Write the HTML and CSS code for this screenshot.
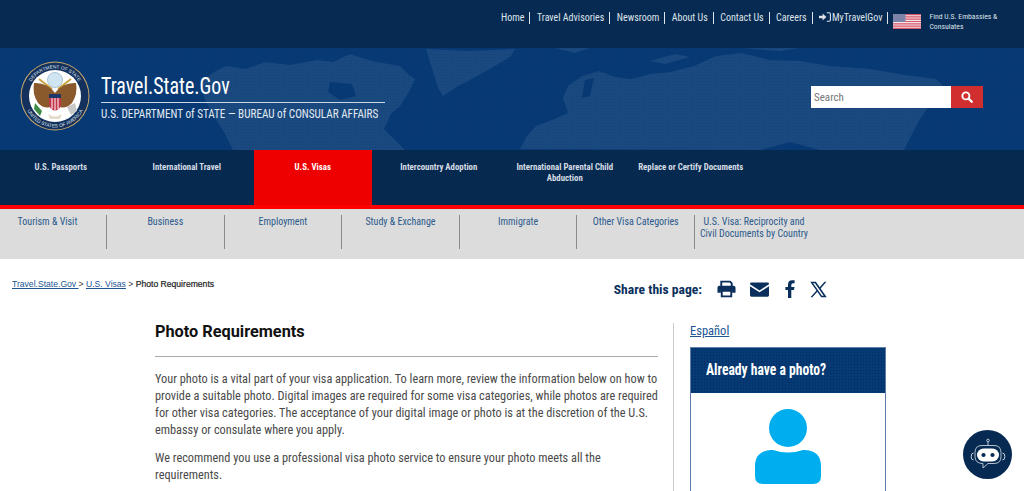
FILE: index.html
```html
<!DOCTYPE html>
<html lang="en">
<head>
    <meta charset="UTF-8">
    <meta name="viewport" content="width=device-width, initial-scale=1.0">
    <title>Photo Requirements</title>
    <link rel="stylesheet" href="styles.css">
</head>
<body>

    <!-- Top links -->
    <div class="topbar">
        <ul class="toplinks">
            <li><a href="#">Home</a></li>
            <li><a href="#">Travel Advisories</a></li>
            <li><a href="#">Newsroom</a></li>
            <li><a href="#">About Us</a></li>
            <li><a href="#">Contact Us</a></li>
            <li><a href="#">Careers</a></li>
            <li>
                <a href="#" class="signin">
                    <svg class="signin-icon" viewBox="0 0 12 10"><path d="M0 3.7h3.6V1.6L7.4 5 3.6 8.4V6.3H0z" fill="#dfe4ea"/><path d="M7.8.8h2.4q1.2 0 1.2 1.2v6q0 1.2-1.2 1.2H7.8" fill="none" stroke="#dfe4ea" stroke-width="1.1"/></svg>MyTravelGov
                </a>
            </li>
        </ul>
        <svg class="flag" viewBox="0 0 27 15" preserveAspectRatio="none">
            <rect width="27" height="15" fill="#f3e6e8"/>
            <path d="M0 .6h27M0 2.9h27M0 5.2h27M0 7.5h27M0 9.8h27M0 12.1h27M0 14.4h27" stroke="#d9566a" stroke-width="1.2"/>
            <rect width="12" height="8" fill="#7d83a8"/>
        </svg>
        <a href="#" class="embassies">Find U.S. Embassies &amp; Consulates</a>
    </div>

    <!-- Header with map -->
    <header class="masthead">
        <svg class="worldmap" viewBox="0 0 1024 102" preserveAspectRatio="none">
            <defs>
                <pattern id="dots" width="3" height="3" patternUnits="userSpaceOnUse"><rect width="1" height="1" fill="#04295c" opacity=".2"/></pattern>
            </defs>
            <!-- north america -->
            <path d="M233 102L224 84L215 70L205 52L200 34L214 24L226 18L246 21L265 14L290 17L317 12L333 14L350 6L372 13L400 18L408 26L415 31L409 44L400 58L391 66L384 81L393 90L405 102Z" fill="#19497f"/>
            <!-- greenland -->
            <path d="M426 1L470 3L515 1L511 8L505 12L488 22L470 32L458 38L443 48L438 40L435 30L430 14Z" fill="#19497f"/>
            <!-- eurasia -->
            <path d="M520 101L527 88L536 78L552 72L568 65L563 50L568 38L582 28L599 23L615 29L631 31L650 26L670 24L694 18L716 8L741 5L770 12L800 13L830 18L870 21L905 27L936 31L946 41L933 52L920 71L913 84L904 102L820 102L790 94L760 102Z" fill="#19497f"/>
            <path d="M650 13L675 6L690 9L665 16ZM555 0L590 0L575 5ZM740 0L800 0L780 3Z" fill="#19497f"/>
            <!-- water cut outs -->
            <path d="M330 34L352 36L356 48L340 52L328 44ZM585 32L594 30L590 48L582 50Z" fill="#073a75"/>
            <rect width="1024" height="102" fill="url(#dots)"/>
        </svg>
        <div class="brand">
            <svg class="seal" viewBox="0 0 70 70">
                <defs>
                    <path id="sealtop" d="M35 35 m-27.6 0 a27.6 27.6 0 0 1 55.2 0"/>
                    <path id="sealbottom" d="M35 35 m-31.4 0 a31.4 31.4 0 0 0 62.8 0"/>
                </defs>
                <circle cx="35" cy="35" r="34.5" fill="#c9a86a"/>
                <circle cx="35" cy="35" r="33.5" fill="#14305c"/>
                <circle cx="35" cy="35" r="26" fill="#fff"/>
                <text class="seal-text"><textPath href="#sealtop" startOffset="50%" text-anchor="middle">DEPARTMENT OF STATE</textPath></text>
                <text class="seal-text"><textPath href="#sealbottom" startOffset="50%" text-anchor="middle">UNITED STATES OF AMERICA</textPath></text>
                <circle cx="35" cy="19" r="7.5" fill="#cfe6f2" stroke="#a9c4d6"/>
                <path d="M19 18l13 10M51 18l-13 10" stroke="#c9a33f" stroke-width="2"/>
                <path d="M35 32 Q27 21 14 22 Q12 33 18 42 Q24 48 30 46 L40 46 Q46 48 52 42 Q58 33 56 22 Q43 21 35 32Z" fill="#8a5a2c"/>
                <path d="M29 33h12v10q0 5-6 7-6-2-6-7z" fill="#c3344a"/>
                <path d="M29 33h12v4H29z" fill="#1c3768"/>
                <path d="M32 37v11M35 37v13M38 37v11" stroke="#fff" stroke-width="1"/>
                <path d="M15 42l7 8-2 5-6-7z" fill="#3f8c48"/>
                <path d="M47 46l8-4 2 8-6 4z" fill="#c9c9c9"/>
                <path d="M28 53q7 5 14 0l-2 5h-10z" fill="#e4dcc8"/>
            </svg>
            <div class="brand-text">
                <div class="sitename-row"><a href="#" class="sitename">Travel.State.Gov</a></div>
                <div class="bureau">U.S. DEPARTMENT of STATE — BUREAU of CONSULAR AFFAIRS</div>
            </div>
        </div>
        <form class="search">
            <input class="search-input" type="text" placeholder="Search">
            <button class="search-btn" type="button" aria-label="Search">
                <svg viewBox="0 0 12 12" width="12" height="12"><circle cx="4.9" cy="4.9" r="3.5" fill="none" stroke="#fff" stroke-width="1.9"/><path d="M7.6 7.6l3.2 3.2" stroke="#fff" stroke-width="2.2" stroke-linecap="round"/></svg>
            </button>
        </form>
    </header>

    <!-- Main navigation -->
    <nav class="mainnav">
        <a href="#" class="mainnav-item">U.S. Passports</a>
        <a href="#" class="mainnav-item">International Travel</a>
        <a href="#" class="mainnav-item active">U.S. Visas</a>
        <a href="#" class="mainnav-item">Intercountry Adoption</a>
        <a href="#" class="mainnav-item">International Parental Child Abduction</a>
        <a href="#" class="mainnav-item">Replace or Certify Documents</a>
    </nav>

    <nav class="subnav">
        <a href="#" class="subnav-item">Tourism &amp; Visit</a>
        <a href="#" class="subnav-item">Business</a>
        <a href="#" class="subnav-item">Employment</a>
        <a href="#" class="subnav-item">Study &amp; Exchange</a>
        <a href="#" class="subnav-item">Immigrate</a>
        <a href="#" class="subnav-item">Other Visa Categories</a>
        <a href="#" class="subnav-item last">U.S. Visa: Reciprocity and<br>Civil Documents by Country</a>
    </nav>

    <!-- Breadcrumb and share -->
    <div class="toolrow">
        <div class="breadcrumb">
            <a href="#">Travel.State.Gov </a> &gt; <a href="#">U.S. Visas</a> &gt; <span class="crumb-current">Photo Requirements</span>
        </div>
        <div class="share">
            <span class="share-label">Share this page:</span>
            <svg class="share-icon print" viewBox="0 0 20 18"><path d="M4.5 6V1.2h9.2L15.5 3v3" fill="none" stroke="#0a2f5c" stroke-width="2"/><path d="M2.6 5.5h14.8Q19.5 5.5 19.5 7.6V13h-3.6v-2.6H4.1V13H.5V7.6Q.5 5.5 2.6 5.5z" fill="#0a2f5c"/><path d="M5 11h10v5.8H5z" fill="#fff" stroke="#0a2f5c" stroke-width="2"/></svg>
            <svg class="share-icon mail" viewBox="0 0 20 15"><path d="M1.5 0h17Q20 0 20 1.5v.6l-10 6.4L0 2.1v-.6Q0 0 1.5 0z" fill="#0a2f5c"/><path d="M0 4l10 6.4L20 4v9.5q0 1.5-1.5 1.5h-17Q0 15 0 13.5z" fill="#0a2f5c"/></svg>
            <svg class="share-icon fb" viewBox="0 0 10 18"><path d="M3 18V10H.4V6.9H3V4.6Q3 .3 7.2.3h2.4v3H8q-1.7 0-1.7 1.7V6.9h3.2L9 10H6.3v8z" fill="#0a2f5c"/></svg>
            <svg class="share-icon xlogo" viewBox="0 0 18 17"><path d="M.3.3h5.9L17.7 16.7h-5.9zM3.3 1.9l9.3 13.2h1.9L5.2 1.9z" fill="#0a2f5c" fill-rule="evenodd"/><path d="M15.4.3L9.8 6.7l1 1.4L17.4.3zM7.6 8.7L.5 16.7h2l6-6.6z" fill="#0a2f5c"/></svg>
        </div>
    </div>

    <!-- Page body -->
    <div class="page">
        <main class="article">
            <h1 class="title">Photo Requirements</h1>
            <p>Your photo is a vital part of your visa application. To learn more, review the information below on how to provide a suitable photo. Digital images are required for some visa categories, while photos are required for other visa categories. The acceptance of your digital image or photo is at the discretion of the U.S. embassy or consulate where you apply.</p>
            <p>We recommend you use a professional visa photo service to ensure your photo meets all the requirements.</p>
        </main>
        <aside class="sidebar">
            <a href="#" class="lang">Español</a>
            <div class="card">
                <div class="card-head"><span class="card-title">Already have a photo?</span></div>
                <div class="card-body">
                    <svg class="person" viewBox="0 0 66 75"><circle cx="33" cy="19" r="19" fill="#00aeef"/><path d="M0 62V57C0 44 9 41 18 41Q33 46 48 41C57 41 66 44 66 57V67Q66 75 58 75H8Q0 75 0 67z" fill="#00aeef"/></svg>
                </div>
            </div>
        </aside>
    </div>

    <!-- Chat bot button -->
    <button class="chatbot" type="button" aria-label="Chat">
        <svg viewBox="0 0 36 34" width="36" height="34">
            <circle cx="18" cy="2.5" r="1.3" fill="none" stroke="#dfe6ee" stroke-width=".8"/>
            <path d="M18 4v3.5" stroke="#dfe6ee" stroke-width=".8"/>
            <path d="M3.5 15a2 3 0 0 0 0 7M32.5 15a2 3 0 0 1 0 7" fill="none" stroke="#dfe6ee" stroke-width=".9"/>
            <path d="M12 7.5h12q7 0 7 7v4q0 7-7 7h-6l-5 4.5v-4.5q-8 0-8-7v-4q0-7 7-7z" fill="none" stroke="#dfe6ee" stroke-width=".8"/>
            <rect x="7" y="10.5" width="22" height="13" rx="6.5" fill="#fff"/>
            <circle cx="13.5" cy="17" r="2.1" fill="#062a52"/>
            <circle cx="22.5" cy="17" r="2.1" fill="#062a52"/>
        </svg>
    </button>

</body>
</html>
```

FILE: styles.css
```css
* {
    box-sizing: border-box;
}
html, body {
    height: 491px;
    overflow: hidden;
}
body {
    font-family: "Roboto Condensed", "Liberation Sans Narrow", Roboto, sans-serif;
    font-stretch: 75%;
    margin: 0;
    background-color: #fff;
    color: #4a4a4a;
}
a {
    color: inherit;
    text-decoration: none;
}

/* top bar */
.topbar {
    height: 48px;
    background-color: #062a52;
    display: flex;
    align-items: flex-start;
    padding: 12px 0 0 501px;
    color: #dfe4ea;
}
.toplinks {
    list-style-type: none;
    margin: 0;
    padding: 0;
    display: flex;
    flex: none;
    font-size: 10px;
    line-height: 12px;
    white-space: nowrap;
}
.toplinks li {
    padding: 0 5px 0 0;
    margin-right: 6.5px;
    border-right: 1.5px solid #dfe4ea;
}
.toplinks li:last-child {
    margin-right: 0;
}
.signin-icon {
    width: 12px;
    height: 10px;
    vertical-align: -1px;
    margin-right: 1px;
}
.flag {
    flex: none;
    width: 28px;
    height: 15px;
    margin: 2px 8px 0 5px;
}
.embassies {
    flex: none;
    width: 74px;
    font-size: 7.7px;
    line-height: 10px;
}

/* masthead */
.masthead {
    position: relative;
    height: 102px;
    background-color: #073a75;
    display: flex;
    justify-content: space-between;
    overflow: hidden;
}
.worldmap {
    position: absolute;
    left: 0;
    top: 0;
    width: 100%;
    height: 100%;
}
.brand {
    position: relative;
    display: flex;
    padding: 13px 0 0 20px;
}
.seal {
    width: 70px;
    height: 70px;
}
.seal-text {
    font-size: 4.8px;
    fill: #dfe4ea;
    font-family: "Liberation Sans", sans-serif;
}
.brand-text {
    margin-left: 11px;
    width: 284px;
}
.sitename-row {
    padding-top: 11px;
    padding-bottom: 2px;
    border-bottom: 1px solid #c9d6e6;
}
.sitename {
    display: inline-block;
    color: #fff;
    font-size: 24px;
    line-height: 28px;
    transform: scaleX(.83);
    transform-origin: left center;
}
.bureau {
    color: #e4eaf2;
    font-size: 12px;
    line-height: 14px;
    padding-top: 4px;
    white-space: nowrap;
    transform: scaleX(.93);
    transform-origin: left center;
}
.search {
    position: relative;
    display: flex;
    margin: 38px 41px 0 0;
    height: 22px;
}
.search-input {
    width: 140px;
    height: 22px;
    border: 0;
    padding: 0 3px;
    font-family: inherit;
    font-stretch: inherit;
    font-size: 11px;
    background-color: #fff;
}
.search-btn {
    width: 32px;
    height: 22px;
    border: 0;
    padding: 0;
    background-color: #d12f2f;
    display: flex;
    align-items: center;
    justify-content: center;
}

/* navigation */
.mainnav {
    height: 59px;
    background-color: #06294f;
    border-bottom: 4px solid #f00;
    display: flex;
    gap: 8.4px;
    padding-left: 2px;
}
.mainnav-item {
    width: 117.6px;
    padding-top: 12px;
    text-align: center;
    color: #d5dce4;
    font-size: 8.8px;
    font-weight: 700;
    line-height: 11px;
}
.mainnav-item.active {
    background-color: #e00;
    color: #fff;
}
.subnav {
    height: 50px;
    background-color: #dcdcdc;
    display: flex;
    padding-top: 6px;
}
.subnav-item {
    flex: 0 0 117.6px;
    height: 34px;
    padding-top: 1px;
    text-align: center;
    color: #2b5a8c;
    font-size: 10px;
    line-height: 11.5px;
    border-right: 1px solid #8a8a8a;
}
.subnav-item:first-child {
    flex-basis: 107px;
    padding-right: 11px;
}
.subnav-item.last {
    flex: 0 0 118px;
    border-right: 0;
    white-space: nowrap;
}

/* breadcrumb row */
.toolrow {
    height: 56px;
    display: flex;
    justify-content: space-between;
    align-items: flex-start;
}
.breadcrumb {
    padding: 19px 0 0 12px;
    font-family: "Liberation Sans", sans-serif;
    font-stretch: normal;
    font-size: 8.6px;
    line-height: 12px;
    color: #333;
}
.breadcrumb a {
    color: #205493;
    text-decoration: underline;
}
.crumb-current {
    color: #222;
    -webkit-text-stroke: .2px #222;
}
.share {
    display: flex;
    align-items: center;
    height: 20px;
    margin: 20px 197px 0 0;
}
.share-label {
    color: #0a2f5c;
    font-size: 13.6px;
    font-weight: 700;
    margin-right: 15px;
}
.share-icon {
    display: block;
}
.print { width: 19px; height: 18px; margin-right: 14px; }
.mail { width: 19px; height: 15px; margin-right: 16px; }
.fb { width: 10px; height: 18px; margin-right: 15px; }
.xlogo { width: 17px; height: 17px; }

/* page, cut at the bottom of the window like the screenshot */
.page {
    display: flex;
    height: 176px;
    overflow: hidden;
    padding-left: 155px;
}
.article {
    width: 503px;
    font-size: 12.3px;
    line-height: 17px;
}
.title {
    margin: 0 0 14px;
    padding: 6px 0 13px;
    color: #111;
    font-family: Roboto, sans-serif;
    font-stretch: normal;
    font-size: 16.3px;
    font-weight: 700;
    line-height: 22px;
    border-bottom: 1px solid #aaa;
}
.article p {
    margin: 0 0 11px;
}
.sidebar {
    margin: 8px 0 0 15px;
    border-left: 1px solid #ccc;
    padding-left: 16px;
    height: 168px;
}
.lang {
    display: block;
    color: #205493;
    font-size: 12.5px;
    line-height: 16px;
    text-decoration: underline;
}
.card {
    width: 196px;
    height: 144px;
    margin-top: 8px;
    border: 1px solid #5c7ea8;
    border-bottom: 0;
}
.card-head {
    height: 45px;
    background-color: #053a75;
    background-image: radial-gradient(#04295c 30%, transparent 35%);
    background-size: 3px 3px;
    color: #fff;
    padding: 12px 0 0 15px;
}
.card-title {
    display: inline-block;
    font-size: 16px;
    font-weight: 700;
    line-height: 20px;
    white-space: nowrap;
    transform: scaleX(.85);
    transform-origin: left center;
}
.card-body {
    padding-top: 16px;
    height: 98px;
    text-align: center;
}
.person {
    width: 66px;
    height: 75px;
}

/* chat bot */
.chatbot {
    position: absolute;
    left: 963px;
    top: 430px;
    width: 49px;
    height: 49px;
    border: 0;
    padding: 0;
    border-radius: 50%;
    background-color: #062a52;
    display: flex;
    align-items: center;
    justify-content: center;
}
```
